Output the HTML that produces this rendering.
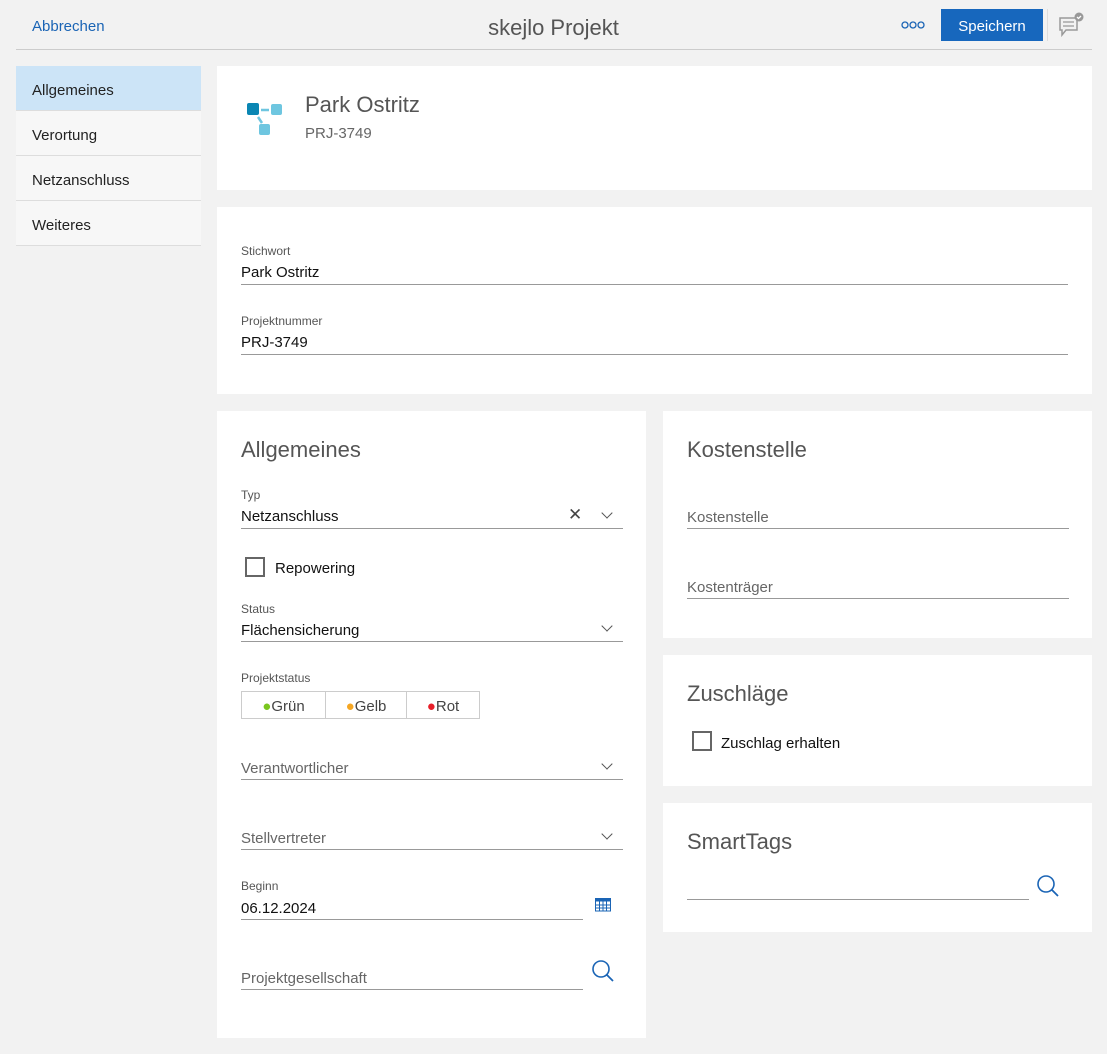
<!DOCTYPE html>
<html><head><meta charset="utf-8"><style>
*{box-sizing:border-box;margin:0;padding:0}
body{width:1107px;height:1054px;background:#f2f2f2;font-family:"Segoe UI","Liberation Sans",sans-serif;color:#222;position:relative;overflow:hidden}
.a{position:absolute}
.card{position:absolute;background:#fff}
.lbl{position:absolute;font-size:12px;color:#555}
.val{position:absolute;font-size:15px;color:#111;margin-top:3px}
.ph{position:absolute;font-size:15px;color:#666;margin-top:3px}
.line{position:absolute;height:1px;background:#999}
.h{position:absolute;font-size:22px;color:#555;margin-top:2px}
.chev{position:absolute;width:8px;height:8px;border-right:1.5px solid #555;border-bottom:1.5px solid #555;transform:rotate(45deg)}
.nav{position:absolute;left:16px;width:185px;height:45px;border-bottom:1px solid #ddd;background:#f7f7f7;font-size:15px;line-height:49px;padding-left:16px;color:#222}
.cb{position:absolute;width:20px;height:20px;border:2px solid #666;background:#fff}
</style></head><body>
<div class="a" style="left:32px;top:18px;font-size:15px;color:#1a64b5">Abbrechen</div>
<div class="a" style="left:0;width:1107px;text-align:center;top:15px;font-size:22px;color:#555">skejlo Projekt</div>
<svg class="a" style="left:901px;top:21px" width="24" height="8"><circle cx="4" cy="4" r="3" fill="none" stroke="#1a64b5" stroke-width="1.3"/><circle cx="12" cy="4" r="3" fill="none" stroke="#1a64b5" stroke-width="1.3"/><circle cx="20" cy="4" r="3" fill="none" stroke="#1a64b5" stroke-width="1.3"/></svg>
<div class="a" style="left:941px;top:9px;width:102px;height:32px;background:#1767bd;color:#fff;font-size:15px;line-height:35px;text-align:center">Speichern</div>
<div class="a" style="left:1047px;top:9px;width:1px;height:32px;background:#ddd"></div>
<svg class="a" style="left:1058px;top:12px" width="28" height="28" viewBox="0 0 28 28"><path d="M2 6h17v12H8l-4 5v-5H2z" fill="none" stroke="#999" stroke-width="1.5"/><path d="M5 10h11M5 14h11" stroke="#999" stroke-width="1.3"/><circle cx="21" cy="5" r="4.5" fill="#999"/><path d="M19 5l1.5 1.5L23 4" stroke="#fff" stroke-width="1.3" fill="none"/></svg>
<div class="a" style="left:16px;top:49px;width:1076px;height:1px;background:#ccc"></div>

<div class="nav" style="top:66px;background:#cce4f7">Allgemeines</div>
<div class="nav" style="top:111px">Verortung</div>
<div class="nav" style="top:156px">Netzanschluss</div>
<div class="nav" style="top:201px">Weiteres</div>

<div class="card" style="left:217px;top:66px;width:875px;height:124px">
<svg class="a" style="left:30px;top:36px" width="40" height="38"><rect x="0" y="1" width="12" height="12" rx="2" fill="#0a86b3"/><rect x="24" y="2" width="11" height="11" rx="2" fill="#6ec6e0"/><rect x="12" y="22" width="11" height="11" rx="2" fill="#6ec6e0"/><path d="M14 8h8M11 15l4 6" stroke="#6ec6e0" stroke-width="2.5"/></svg>
<div class="a" style="left:88px;top:26px;font-size:22px;color:#555">Park Ostritz</div>
<div class="a" style="left:88px;top:59px;font-size:15px;color:#666">PRJ-3749</div>
</div>

<div class="card" style="left:217px;top:207px;width:875px;height:187px">
<div class="lbl" style="left:24px;top:37px">Stichwort</div>
<div class="val" style="left:24px;top:54px">Park Ostritz</div>
<div class="line" style="left:24px;top:77px;width:827px"></div>
<div class="lbl" style="left:24px;top:107px">Projektnummer</div>
<div class="val" style="left:24px;top:124px">PRJ-3749</div>
<div class="line" style="left:24px;top:147px;width:827px"></div>
</div>

<div class="card" style="left:217px;top:411px;width:429px;height:627px">
<div class="h" style="left:24px;top:24px">Allgemeines</div>
<div class="lbl" style="left:24px;top:77px">Typ</div>
<div class="val" style="left:24px;top:94px">Netzanschluss</div>
<div class="a" style="left:351px;top:94px;font-size:17px;color:#444">✕</div>
<div class="chev" style="left:386px;top:98px"></div>
<div class="line" style="left:24px;top:117px;width:382px"></div>
<div class="cb" style="left:28px;top:146px"></div>
<div class="val" style="left:58px;top:146px">Repowering</div>
<div class="lbl" style="left:24px;top:191px">Status</div>
<div class="val" style="left:24px;top:208px">Flächensicherung</div>
<div class="chev" style="left:386px;top:211px"></div>
<div class="line" style="left:24px;top:230px;width:382px"></div>
<div class="lbl" style="left:24px;top:260px">Projektstatus</div>
<div class="a" style="left:24px;top:280px;width:239px;height:28px;border:1px solid #ccc;display:flex;font-size:15px;color:#444">
<div style="width:84px;border-right:1px solid #ccc;text-align:center;line-height:29px"><span style="color:#7ac61f">●</span>Grün</div>
<div style="width:81px;border-right:1px solid #ccc;text-align:center;line-height:29px"><span style="color:#f5a623">●</span>Gelb</div>
<div style="flex:1;text-align:center;line-height:29px"><span style="color:#e8202a">●</span>Rot</div></div>
<div class="ph" style="left:24px;top:346px">Verantwortlicher</div>
<div class="chev" style="left:386px;top:349px"></div>
<div class="line" style="left:24px;top:368px;width:382px"></div>
<div class="ph" style="left:24px;top:416px">Stellvertreter</div>
<div class="chev" style="left:386px;top:419px"></div>
<div class="line" style="left:24px;top:438px;width:382px"></div>
<div class="lbl" style="left:24px;top:468px">Beginn</div>
<div class="val" style="left:24px;top:486px">06.12.2024</div>
<div class="line" style="left:24px;top:508px;width:342px"></div>
<svg class="a" style="left:378px;top:487px" width="16" height="14"><rect x="0.5" y="0.5" width="15" height="12.5" fill="none" stroke="#1a64b5"/><rect x="0.5" y="0.5" width="15" height="3" fill="#1a64b5"/><path d="M4.5 3v10M8 3v10M11.5 3v10M0 7h16M0 10h16" stroke="#1a64b5"/></svg>
<div class="ph" style="left:24px;top:556px">Projektgesellschaft</div>
<div class="line" style="left:24px;top:578px;width:342px"></div>
<svg class="a" style="left:374px;top:548px" width="24" height="24"><circle cx="10" cy="10" r="8" fill="none" stroke="#1a64b5" stroke-width="1.6"/><path d="M16 16l6 6" stroke="#1a64b5" stroke-width="1.8"/></svg>
</div>

<div class="card" style="left:663px;top:411px;width:429px;height:227px">
<div class="h" style="left:24px;top:24px">Kostenstelle</div>
<div class="ph" style="left:24px;top:95px">Kostenstelle</div>
<div class="line" style="left:24px;top:117px;width:382px"></div>
<div class="ph" style="left:24px;top:165px">Kostenträger</div>
<div class="line" style="left:24px;top:187px;width:382px"></div>
</div>
<div class="card" style="left:663px;top:655px;width:429px;height:131px">
<div class="h" style="left:24px;top:24px">Zuschläge</div>
<div class="cb" style="left:29px;top:76px"></div>
<div class="val" style="left:58px;top:77px">Zuschlag erhalten</div>
</div>
<div class="card" style="left:663px;top:803px;width:429px;height:129px">
<div class="h" style="left:24px;top:24px">SmartTags</div>
<div class="line" style="left:24px;top:96px;width:342px"></div>
<svg class="a" style="left:373px;top:71px" width="24" height="24"><circle cx="10" cy="10" r="8" fill="none" stroke="#1a64b5" stroke-width="1.6"/><path d="M16 16l6 6" stroke="#1a64b5" stroke-width="1.8"/></svg>
</div>
</body></html>
